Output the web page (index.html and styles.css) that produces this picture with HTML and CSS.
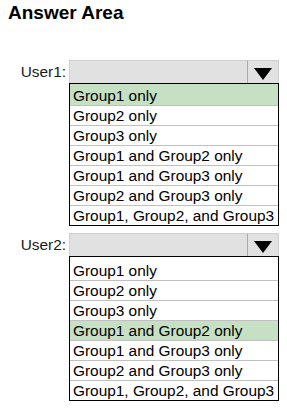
FILE: index.html
```html
<!DOCTYPE html>
<html lang="en">
<head>
    <meta charset="UTF-8">
    <meta name="viewport" content="width=device-width, initial-scale=1.0">
    <title>Answer Area</title>
    <link rel="stylesheet" href="styles.css">
</head>
<body>
    <h2 class="titulo">Answer Area</h2>

    <div class="usuario primeiro">
        <span class="rotulo">User1:</span>
        <div class="caixa">
            <div class="seletor">
                <span class="valor"></span>
                <span class="seta"><span class="triangulo"></span></span>
            </div>
            <ul class="lista">
                <li class="escolhida">Group1 only</li>
                <li>Group2 only</li>
                <li>Group3 only</li>
                <li>Group1 and Group2 only</li>
                <li>Group1 and Group3 only</li>
                <li>Group2 and Group3 only</li>
                <li>Group1, Group2, and Group3</li>
            </ul>
        </div>
    </div>

    <div class="usuario segundo">
        <span class="rotulo">User2:</span>
        <div class="caixa">
            <div class="seletor">
                <span class="valor"></span>
                <span class="seta"><span class="triangulo"></span></span>
            </div>
            <ul class="lista">
                <li>Group1 only</li>
                <li>Group2 only</li>
                <li>Group3 only</li>
                <li class="escolhida">Group1 and Group2 only</li>
                <li>Group1 and Group3 only</li>
                <li>Group2 and Group3 only</li>
                <li>Group1, Group2, and Group3</li>
            </ul>
        </div>
    </div>
</body>
</html>
```

FILE: styles.css
```css
body {
    margin: 0;
    font-family: "Liberation Sans", Arial, sans-serif;
    color: #000;
    background: #fff;
}

.titulo {
    margin: 0;
    padding: 2px 0 0 8px;
    font-size: 19px;
    line-height: 22px;
    font-weight: bold;
}

.usuario {
    display: flex;
    flex-direction: row;
    align-items: flex-start;
}

.primeiro {
    margin-top: 36px;
}

.segundo {
    margin-top: 7px;
}

.rotulo {
    width: 66px;
    text-align: right;
    font-size: 15.4px;
    line-height: 23px;
    color: #1a1a1a;
    margin-right: 3px;
}

.caixa {
    width: 210px;
}

.seletor {
    display: flex;
    height: 23px;
    box-sizing: border-box;
    border: 1px solid #cfcfcf;
    border-bottom: none;
    background: #e1e1e1;
}

.valor {
    flex: 1;
}

.seta {
    width: 30px;
    border-left: 1px solid #a8a8a8;
    display: flex;
    justify-content: center;
    align-items: center;
}

.triangulo {
    width: 0;
    height: 0;
    margin-top: 4px;
    border-left: 9px solid transparent;
    border-right: 9px solid transparent;
    border-top: 12px solid #000;
}

.lista {
    list-style: none;
    margin: 0;
    padding: 0;
    border: 1px solid #000;
}

.lista li {
    font-size: 15.4px;
    line-height: 19px;
    padding-left: 3px;
    border-top: 1px solid #c0c0c0;
}

.lista li:first-child {
    border-top: none;
    padding-top: 2px;
}

.segundo .lista li:first-child {
    padding-top: 4px;
}

.escolhida {
    background: #c6e0c4;
}
```
